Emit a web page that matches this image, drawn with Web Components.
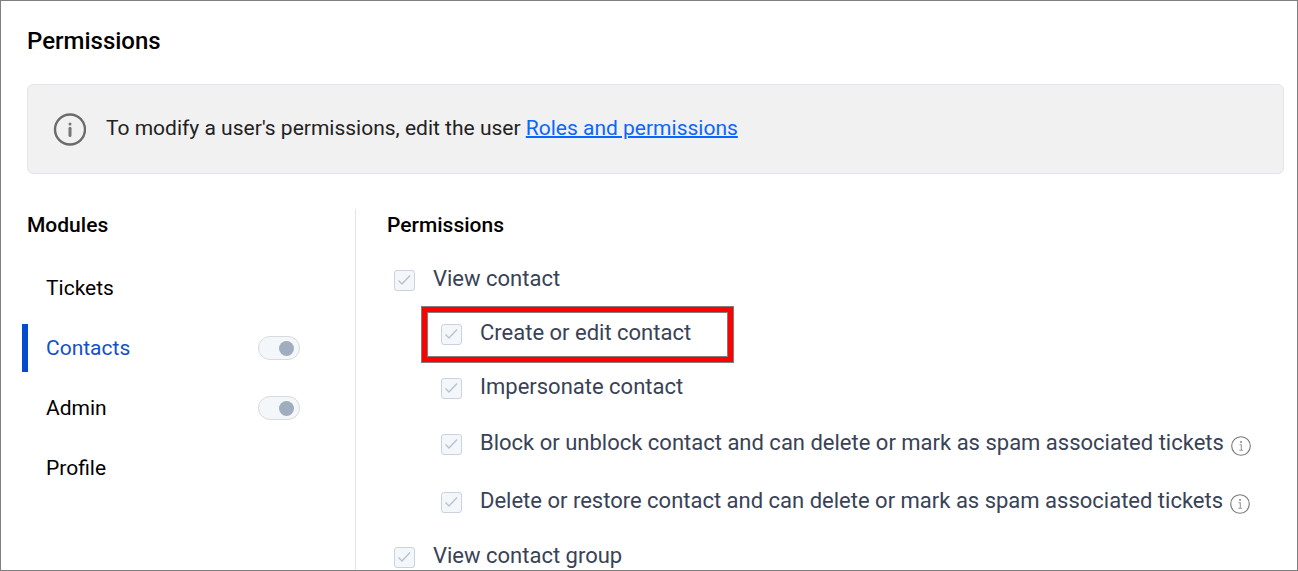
<!DOCTYPE html>
<html lang="en">
<head>
<meta charset="utf-8">
<meta name="viewport" content="width=device-width, initial-scale=1">
<title>Permissions</title>
<style>
  body { margin: 0; background: #fff; font-family: Roboto, "Liberation Sans", sans-serif; }
</style>
</head>
<body>
<permissions-page></permissions-page>

<template id="t-page">
  <style>
    :host { display: flex; flex-direction: column; box-sizing: border-box; min-height: 100vh; border: 1px solid #7f7f7f; padding: 24px 13px 0 26px; color: #000; font-size: 21px; line-height: 32px; }
    h1, h2 { margin: 0; font-weight: 500; line-height: 32px; }
    h1 { font-size: 24px; }
    h2 { font-size: 21px; }
    info-banner { margin-top: 27px; }
    .columns { display: flex; flex: 1; margin-top: 35px; }
    .modules { flex: none; width: 328px; border-right: 1px solid #e3e5ea; }
    .permissions { flex: 1; min-width: 0; padding-left: 31px; }
    ul { list-style: none; margin: 0; padding: 0; }
    li { display: block; }
    .modules ul { display: grid; gap: 12px; margin-top: 23px; }
    .permissions > ul { margin: 12px 0 0 7px; }
    .permissions ul ul { padding-left: 47px; }
  </style>
  <h1>Permissions</h1>
  <info-banner>To modify a user's permissions, edit the user <a href="#roles">Roles and permissions</a></info-banner>
  <div class="columns">
    <section class="modules">
      <h2>Modules</h2>
      <ul>
        <li><module-item name="Tickets"></module-item></li>
        <li><module-item name="Contacts" switchable selected></module-item></li>
        <li><module-item name="Admin" switchable></module-item></li>
        <li><module-item name="Profile"></module-item></li>
      </ul>
    </section>
    <section class="permissions">
      <h2>Permissions</h2>
      <ul>
        <li>
          <permission-row>View contact</permission-row>
          <ul>
            <li><permission-row highlighted>Create or edit contact</permission-row></li>
            <li><permission-row>Impersonate contact</permission-row></li>
            <li><permission-row info>Block or unblock contact and can delete or mark as spam associated tickets</permission-row></li>
            <li><permission-row info>Delete or restore contact and can delete or mark as spam associated tickets</permission-row></li>
          </ul>
        </li>
        <li><permission-row last>View contact group</permission-row></li>
      </ul>
    </section>
  </div>
</template>

<template id="t-banner">
  <style>
    :host { display: flex; align-items: center; gap: 20px; box-sizing: border-box; min-height: 90px; padding: 0 25px; border: 1px solid #e1e5ef; border-radius: 6px; background: #f1f1f1; color: #222; }
    svg { flex: none; width: 33px; height: 33px; }
    p { margin: 0 0 2px; }
    ::slotted(a) { color: #0a66ff; text-decoration: underline; text-decoration-thickness: 2px; }
  </style>
  <svg viewBox="0 0 33 33" aria-hidden="true"><circle cx="17" cy="16.5" r="15" fill="none" stroke="#6b6b6b" stroke-width="2.4"/><circle cx="17" cy="11" r="1.5" fill="#777"/><path d="M17 15.2V22.6" stroke="#777" stroke-width="3" stroke-linecap="round"/></svg>
  <p><slot></slot></p>
</template>

<template id="t-module">
  <style>
    :host { display: flex; align-items: center; justify-content: space-between; height: 48px; margin-left: -5px; padding-right: 55px; border-left: 6px solid transparent; }
    :host([selected]) { border-left-color: #034ccd; color: #134fcb; }
    a { padding-left: 18px; color: inherit; text-decoration: none; }
    input { appearance: none; box-sizing: border-box; width: 42px; height: 24px; margin: 0; padding: 0 5px; border: 1px solid #d8dadd; border-radius: 12px; background: #f3f7fa; display: flex; align-items: center; }
    input::before { content: ""; width: 15px; height: 15px; border-radius: 50%; background: #a0adbf; }
    input:checked { justify-content: flex-end; }
  </style>
  <a href="#module"></a>
</template>

<template id="t-permission">
  <style>
    :host { display: block; position: relative; color: #394256; font-size: 22px; line-height: 22px; }
    .row { display: flex; align-items: center; min-height: 54px; }
    :host([info]) .row { min-height: 58px; }
    :host([last]) .row { min-height: 0; padding-top: 14px; }
    label { display: flex; align-items: center; gap: 18px; }
    .text { padding-bottom: 2px; }
    .box { flex: none; display: grid; width: 21px; height: 21px; }
    .box > * { grid-area: 1 / 1; }
    input { appearance: none; box-sizing: border-box; width: 21px; height: 21px; margin: 0; border: 1px solid #c9d1e2; border-radius: 3px; background: #f3f7fa; }
    .box svg { width: 21px; height: 21px; pointer-events: none; }
    .info { flex: none; width: 20px; height: 20px; margin: 4px 0 0 7px; }
    :host([highlighted])::after { content: ""; position: absolute; inset: 0 auto -1px -19px; width: 301px; border: 5px solid #f00; outline: 1px solid #7f7f7f; box-shadow: inset 0 0 0 1px #7f7f7f; pointer-events: none; box-sizing: content-box; }
  </style>
  <div class="row">
    <label>
      <span class="box"><input type="checkbox" checked disabled><svg viewBox="0 0 21 21" aria-hidden="true"><path d="M4.5 10.5L8 14L16 5.5" fill="none" stroke="#b6c1d1" stroke-width="1.4"/></svg></span>
      <span class="text"><slot></slot></span>
    </label>
  </div>
</template>

<template id="t-info">
  <svg class="info" viewBox="0 0 20 20" aria-hidden="true"><circle cx="10" cy="10" r="9.3" fill="none" stroke="#777" stroke-width="1.1"/><circle cx="10" cy="6" r="1" fill="#888"/><path d="M8.5 8.8H10.3V14M8.3 14.2H12" fill="none" stroke="#999" stroke-width="1.1"/></svg>
</template>

<script>
  const stamp = id => document.getElementById(id).content.cloneNode(true);

  class InfoBanner extends HTMLElement {
    constructor() { super(); this.attachShadow({ mode: "open" }).append(stamp("t-banner")); }
  }

  class ModuleItem extends HTMLElement {
    connectedCallback() {
      if (this.shadowRoot) return;
      const root = this.attachShadow({ mode: "open" });
      root.append(stamp("t-module"));
      const name = this.getAttribute("name");
      root.querySelector("a").textContent = name;
      if (this.hasAttribute("switchable")) {
        const toggle = document.createElement("input");
        toggle.type = "checkbox";
        toggle.setAttribute("role", "switch");
        toggle.setAttribute("aria-label", name);
        toggle.checked = true;
        toggle.disabled = true;
        root.append(toggle);
      }
    }
  }

  class PermissionRow extends HTMLElement {
    connectedCallback() {
      if (this.shadowRoot) return;
      const root = this.attachShadow({ mode: "open" });
      root.append(stamp("t-permission"));
      if (this.hasAttribute("info")) root.querySelector(".row").append(stamp("t-info"));
    }
  }

  class PermissionsPage extends HTMLElement {
    constructor() { super(); this.attachShadow({ mode: "open" }).append(stamp("t-page")); }
  }

  customElements.define("info-banner", InfoBanner);
  customElements.define("module-item", ModuleItem);
  customElements.define("permission-row", PermissionRow);
  customElements.define("permissions-page", PermissionsPage);
</script>
</body>
</html>
